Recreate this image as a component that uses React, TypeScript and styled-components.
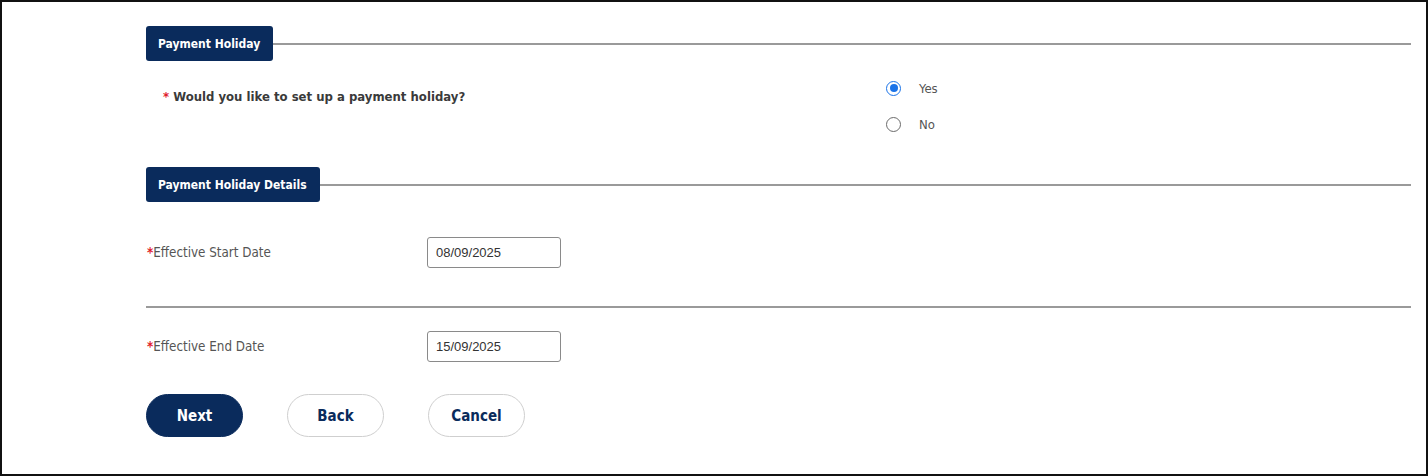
import styled, { createGlobalStyle } from "styled-components";

const GlobalStyle = createGlobalStyle`
  html, body {
    margin: 0;
    padding: 0;
    background: #fff;
  }
  * {
    box-sizing: border-box;
  }
`;

const NAVY = "#0a2b5c";
const FONT = `"DejaVu Sans Condensed", "Liberation Sans", sans-serif`;

export default function App() {
  return (
    <>
      <GlobalStyle />
      <Frame>
        <SectionHeader>
          <Badge>Payment Holiday</Badge>
          <HeaderLine />
        </SectionHeader>

        <QuestionRow>
          <Question>
            <Req>*</Req> Would you like to set up a payment holiday?
          </Question>
          <RadioGroup>
            <RadioItem>
              <RadioCircle $checked />
              <RadioLabel>Yes</RadioLabel>
            </RadioItem>
            <RadioItem>
              <RadioCircle />
              <RadioLabel>No</RadioLabel>
            </RadioItem>
          </RadioGroup>
        </QuestionRow>

        <SectionHeader $gap={33}>
          <Badge>Payment Holiday Details</Badge>
          <HeaderLine />
        </SectionHeader>

        <FieldRow $gap={35}>
          <FieldLabel>
            <Req>*</Req>Effective Start Date
          </FieldLabel>
          <DateInput defaultValue="08/09/2025" />
        </FieldRow>

        <Divider />

        <FieldRow $gap={23}>
          <FieldLabel>
            <Req>*</Req>Effective End Date
          </FieldLabel>
          <DateInput defaultValue="15/09/2025" />
        </FieldRow>

        <Actions>
          <ActionButton $primary>Next</ActionButton>
          <ActionButton>Back</ActionButton>
          <ActionButton>Cancel</ActionButton>
        </Actions>
      </Frame>
    </>
  );
}

const Frame = styled.div`
  width: 1428px;
  height: 476px;
  border: 2px solid #111;
  padding: 24px 15px 0 144px;
  font-family: ${FONT};
  background: #fff;
`;

const SectionHeader = styled.div<{ $gap?: number }>`
  display: flex;
  align-items: center;
  margin-top: ${(p) => p.$gap ?? 0}px;
`;

const Badge = styled.div`
  height: 35px;
  padding: 0 13px 0 12px;
  display: flex;
  align-items: center;
  background: ${NAVY};
  color: #fff;
  border-radius: 3px;
  font-size: 12px;
  font-weight: 700;
`;

const HeaderLine = styled.div`
  flex: 1;
  height: 2px;
  background: #9a9a9a;
`;

const QuestionRow = styled.div`
  display: grid;
  grid-template-columns: 740px 1fr;
  margin-top: 17px;
`;

const Question = styled.div`
  padding: 10px 0 0 17px;
  font-size: 13px;
  line-height: 18px;
  font-weight: 700;
  color: #3a3a3a;
`;

const Req = styled.span`
  color: #e0202a;
  font-weight: 700;
`;

const RadioGroup = styled.div`
  display: flex;
  flex-direction: column;
  gap: 16px;
`;

const RadioItem = styled.label`
  display: flex;
  align-items: center;
  height: 20px;
  gap: 18px;
`;

const RadioCircle = styled.span<{ $checked?: boolean }>`
  width: 15px;
  height: 15px;
  border-radius: 50%;
  border: 1.5px solid ${(p) => (p.$checked ? "#1a73e8" : "#6b6b6b")};
  display: flex;
  align-items: center;
  justify-content: center;

  &::after {
    content: "";
    width: 8px;
    height: 8px;
    border-radius: 50%;
    background: ${(p) => (p.$checked ? "#1a73e8" : "transparent")};
  }
`;

const RadioLabel = styled.span`
  font-size: 13px;
  color: #555;
`;

const FieldRow = styled.div<{ $gap: number }>`
  display: grid;
  grid-template-columns: 281px 134px;
  align-items: center;
  margin-top: ${(p) => p.$gap}px;
`;

const FieldLabel = styled.div`
  font-size: 13.3px;
  color: #555;
  padding-left: 1px;
`;

const DateInput = styled.input`
  width: 134px;
  height: 31px;
  border: 1.5px solid #8a8a8a;
  border-radius: 3px;
  padding: 0 8px;
  font-family: "Liberation Sans", Arial, sans-serif;
  font-size: 13px;
  color: #333;
  background: #fff;
  outline: none;
`;

const Divider = styled.div`
  height: 2px;
  background: #9a9a9a;
  margin-top: 38px;
`;

const Actions = styled.div`
  display: flex;
  gap: 44px;
  margin-top: 32px;
`;

const ActionButton = styled.button<{ $primary?: boolean }>`
  width: 97px;
  height: 43px;
  border-radius: 22px;
  border: 1.5px solid ${(p) => (p.$primary ? NAVY : "#cfcfcf")};
  background: ${(p) => (p.$primary ? NAVY : "#fff")};
  color: ${(p) => (p.$primary ? "#fff" : NAVY)};
  font-family: ${FONT};
  font-size: 15px;
  font-weight: 700;
  cursor: pointer;
`;
